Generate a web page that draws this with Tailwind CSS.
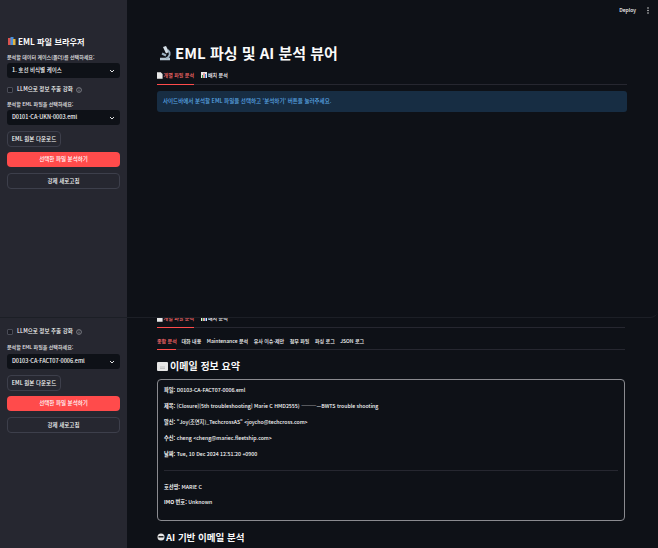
<!DOCTYPE html>
<html lang="ko">
<head>
<meta charset="UTF-8">
<meta name="viewport" content="width=device-width, initial-scale=1.0">
<script src="https://cdn.jsdelivr.net/npm/@tailwindcss/browser@4"></script>
<title>EML 파싱 및 AI 분석 뷰어</title>
</head>
<body class="bg-[#0e1117]">
<div class="relative w-[658px] h-[548px] overflow-hidden bg-[#0e1117] text-[#fafafa] font-['Noto_Sans_CJK_KR','Noto_Sans',sans-serif]">

  <!-- lower page, scrolled -->
  <div class="flex h-full">
    <aside class="w-[127px] shrink-0 bg-[#262730] px-[7px] pt-[325px] flex flex-col">
      <label class="flex items-center gap-[4px] h-[14px] text-[5.5px] leading-none font-medium">
        <span class="w-[6px] h-[6px] rounded-[1px] border border-[#4a4c57] bg-[#1c1d25]"></span>
        <span>LLM으로 정보 추출 강화</span>
        <svg class="w-[6px] h-[6px] -ml-[1px]" viewBox="0 0 16 16" fill="none" stroke="#b0b2ba" stroke-width="1.5"><circle cx="8" cy="8" r="6.5"/><path d="M8 7v5M8 4v1.5"/></svg>
      </label>
      <p class="mt-[3px] text-[5px] leading-[10px] font-medium text-[#e6e6e8]">분석할 EML 파일을 선택하세요:</p>
      <div class="mt-[2px] h-[15px] rounded-[3px] bg-[#0e1117] flex items-center justify-between px-[5px] text-[5.5px] font-medium">
        <span>D0103-CA-FACT07-0006.eml</span>
        <svg class="w-[6px] h-[6px]" viewBox="0 0 12 12" fill="none" stroke="#fafafa" stroke-width="1.8"><path d="M2 4l4 4 4-4"/></svg>
      </div>
      <button class="mt-[6px] w-[54px] h-[16px] rounded-[4px] border border-[#3d3f4b] bg-[#262730] text-[5.5px] font-medium whitespace-nowrap">EML 원본 다운로드</button>
      <button class="mt-[5px] h-[15px] rounded-[4px] bg-[#ff4b4b] text-[5.5px] font-medium text-white">선택한 파일 분석하기</button>
      <button class="mt-[6px] h-[16px] rounded-[4px] border border-[#3d3f4b] text-[5.5px] font-medium">강제 새로고침</button>
    </aside>

    <main class="w-[468px] ml-[30px] shrink-0 pt-[312px]">
      <div class="flex gap-[7px] h-[16px] border-b border-[#262730] text-[5px] leading-[12px] font-medium whitespace-nowrap">
        <div class="relative w-[37px] h-[16px] flex items-start gap-[1px] text-[#ff6c6c]">
          <svg class="w-[6px] h-[7px] mt-[3px]" viewBox="0 0 6 7"><path d="M0 0h4l2 2v5H0z" fill="#e8e8e8"/></svg>
          <span>개별 파일 분석</span>
          <span class="absolute left-0 right-0 bottom-0 h-px bg-[#ff4b4b]"></span>
        </div>
        <div class="flex items-start gap-[1px]">
          <svg class="w-[6px] h-[6px] mt-[3px]" viewBox="0 0 6 6"><path d="M0 0h6v6H0z" fill="#e8e8e8"/><path d="M1 3h1v3H1z" fill="#3b9f4a"/><path d="M2.500 1h1v5h-1z" fill="#d9534f"/><path d="M4 2h1v4H4z" fill="#3b7fd9"/></svg>
          <span>배치 분석</span>
        </div>
      </div>
      <div class="mt-[6px] flex gap-[5.5px] h-[16px] pt-px border-b border-[#262730] text-[5px] leading-[12px] font-medium whitespace-nowrap">
        <div class="relative w-[19px] h-[15px] text-[#ff6c6c]">종합 분석<span class="absolute left-0 right-0 bottom-0 h-px bg-[#ff4b4b]"></span></div>
        <span>대화 내용</span>
        <span>Maintenance 분석</span>
        <span>유사 이슈·제안</span>
        <span>첨부 파일</span>
        <span>파싱 로그</span>
        <span>JSON 로그</span>
      </div>
      <h2 class="mt-[6px] flex items-center gap-[2px] text-[10px] leading-[20px] font-bold">
        <svg class="w-[11px] h-[9px]" viewBox="0 0 11 9"><rect width="11" height="9" rx="1" fill="#e6e6e6"/><path d="M3 5h5M3 6.500h5" stroke="#aaa" stroke-width=".6"/></svg>
        이메일 정보 요약
      </h2>
      <div class="mt-[3px] h-[142px] rounded-[4px] border border-[#8a8b90] px-[6px] pt-[5px] text-[5.2px] leading-[10px] font-medium">
        <p><b>파일:</b> D0103-CA-FACT07-0006.eml</p>
        <p class="mt-[6px]"><b>제목:</b> [Closure][5th troubleshooting] Marie C HMD2555) ————BWTS trouble shooting</p>
        <p class="mt-[6px]"><b>발신:</b> "Joy(조연지)_TechcrossAS" &lt;joycho@techcross.com&gt;</p>
        <p class="mt-[6px]"><b>수신:</b> cheng &lt;cheng@mariec.fleetship.com&gt;</p>
        <p class="mt-[6px]"><b>날짜:</b> Tue, 10 Dec 2024 12:51:20 +0900</p>
        <div class="mt-[11px] border-t border-[#262730]"></div>
        <p class="mt-[11px]"><b>호선명:</b> MARIE C</p>
        <p class="mt-[5px]"><b>IMO 번호:</b> Unknown</p>
      </div>
      <h2 class="mt-[6px] flex items-center gap-px text-[9.5px] leading-[20px] font-bold">
        <svg class="w-[8px] h-[8px]" viewBox="0 0 8 8"><circle cx="4" cy="4" r="3.500" fill="#e6e6e6"/><path d="M1.500 3h5v1.500h-5z" fill="#222"/></svg>
        AI 기반 이메일 분석
      </h2>
    </main>
  </div>

  <!-- upper screenshot lying over the page -->
  <div class="absolute left-0 top-0 w-full h-[318px] flex rounded-br-[8px] overflow-hidden bg-[#0e1117] border-b border-[#1c1f26] z-10">
    <aside class="w-[127px] shrink-0 bg-[#262730] px-[7px] pt-[34px] flex flex-col">
      <h2 class="flex items-center gap-[2px] text-[8.2px] leading-[14px] font-bold">
        <svg class="w-[9px] h-[9px]" viewBox="0 0 9 9"><rect x="1" y="1" width="3" height="7" fill="#d9534f"/><rect x="3.500" y="0" width="3" height="8" fill="#4a90d9"/><rect x="6" y="2" width="2.500" height="6" fill="#e0b341"/></svg>
        EML 파일 브라우저
      </h2>
      <p class="mt-[4px] text-[5px] leading-[10px] font-medium text-[#e6e6e8]">분석할 데이터 케이스(폴더)를 선택하세요:</p>
      <div class="mt-[1px] h-[15px] rounded-[3px] bg-[#0e1117] flex items-center justify-between px-[5px] text-[5.5px] font-medium">
        <span>1. 호선 비식별 케이스</span>
        <svg class="w-[6px] h-[6px]" viewBox="0 0 12 12" fill="none" stroke="#fafafa" stroke-width="1.8"><path d="M2 4l4 4 4-4"/></svg>
      </div>
      <label class="mt-[5px] flex items-center gap-[4px] h-[14px] text-[5.5px] leading-none font-medium">
        <span class="w-[6px] h-[6px] rounded-[1px] border border-[#4a4c57] bg-[#1c1d25]"></span>
        <span>LLM으로 정보 추출 강화</span>
        <svg class="w-[6px] h-[6px] -ml-[1px]" viewBox="0 0 16 16" fill="none" stroke="#b0b2ba" stroke-width="1.5"><circle cx="8" cy="8" r="6.5"/><path d="M8 7v5M8 4v1.5"/></svg>
      </label>
      <p class="mt-[2px] text-[5px] leading-[10px] font-medium text-[#e6e6e8]">분석할 EML 파일을 선택하세요:</p>
      <div class="mt-[1px] h-[15px] rounded-[3px] bg-[#0e1117] flex items-center justify-between px-[5px] text-[5.5px] font-medium">
        <span>D0101-CA-UKN-0003.eml</span>
        <svg class="w-[6px] h-[6px]" viewBox="0 0 12 12" fill="none" stroke="#fafafa" stroke-width="1.8"><path d="M2 4l4 4 4-4"/></svg>
      </div>
      <button class="mt-[6px] w-[54px] h-[16px] rounded-[4px] border border-[#3d3f4b] bg-[#262730] text-[5.5px] font-medium whitespace-nowrap">EML 원본 다운로드</button>
      <button class="mt-[5px] h-[15px] rounded-[4px] bg-[#ff4b4b] text-[5.5px] font-medium text-white">선택한 파일 분석하기</button>
      <button class="mt-[6px] h-[16px] rounded-[4px] border border-[#3d3f4b] text-[5.5px] font-medium">강제 새로고침</button>
    </aside>
    <main class="relative w-[470px] ml-[30px] shrink-0 pt-[40px]">
      <h1 class="flex items-center gap-[2px] text-[15px] leading-[26px] font-bold">
        <svg class="w-[16px] h-[16px]" viewBox="0 0 16 16" fill="none"><path d="M3 14h10" stroke="#b5c6d2" stroke-width="2.500"/><path d="M6 2l3-1 3 6-3 1.500z" fill="#d5e0e8"/><path d="M5 8.500l4 2" stroke="#9fb4c4" stroke-width="2"/><path d="M11 5c3 3 2 7-2 8.500" stroke="#9fb4c4" stroke-width="1.800"/></svg>
        EML 파싱 및 AI 분석 뷰어
      </h1>
      <div class="mt-[2px] flex gap-[7px] h-[17px] pt-px border-b border-[#262730] text-[5px] leading-[12px] font-medium whitespace-nowrap">
        <div class="relative w-[37px] h-[16px] flex items-start gap-[1px] text-[#ff6c6c]">
          <svg class="w-[6px] h-[7px] mt-[3px]" viewBox="0 0 6 7"><path d="M0 0h4l2 2v5H0z" fill="#e8e8e8"/></svg>
          <span>개별 파일 분석</span>
          <span class="absolute left-0 right-0 bottom-0 h-px bg-[#ff4b4b]"></span>
        </div>
        <div class="flex items-start gap-[1px]">
          <svg class="w-[6px] h-[6px] mt-[3px]" viewBox="0 0 6 6"><path d="M0 0h6v6H0z" fill="#e8e8e8"/><path d="M1 3h1v3H1z" fill="#3b9f4a"/><path d="M2.500 1h1v5h-1z" fill="#d9534f"/><path d="M4 2h1v4H4z" fill="#3b7fd9"/></svg>
          <span>배치 분석</span>
        </div>
      </div>
      <div class="mt-[6px] h-[21px] rounded-[3px] bg-[#172d43] flex items-center px-[6px] text-[5.5px] font-medium text-[#5ba8e6]">사이드바에서 분석할 EML 파일을 선택하고 '분석하기' 버튼을 눌러주세요.</div>
    </main>
    <div class="absolute right-[22px] top-[5px] text-[5px] leading-[10px] font-medium">Deploy</div>
    <svg class="absolute right-[9px] top-[7px] w-[2px] h-[7px]" viewBox="0 0 2 7" fill="#d0d0d0"><circle cx="1" cy="1" r=".8"/><circle cx="1" cy="3.500" r=".8"/><circle cx="1" cy="6" r=".8"/></svg>
  </div>
</div>
</body>
</html>
